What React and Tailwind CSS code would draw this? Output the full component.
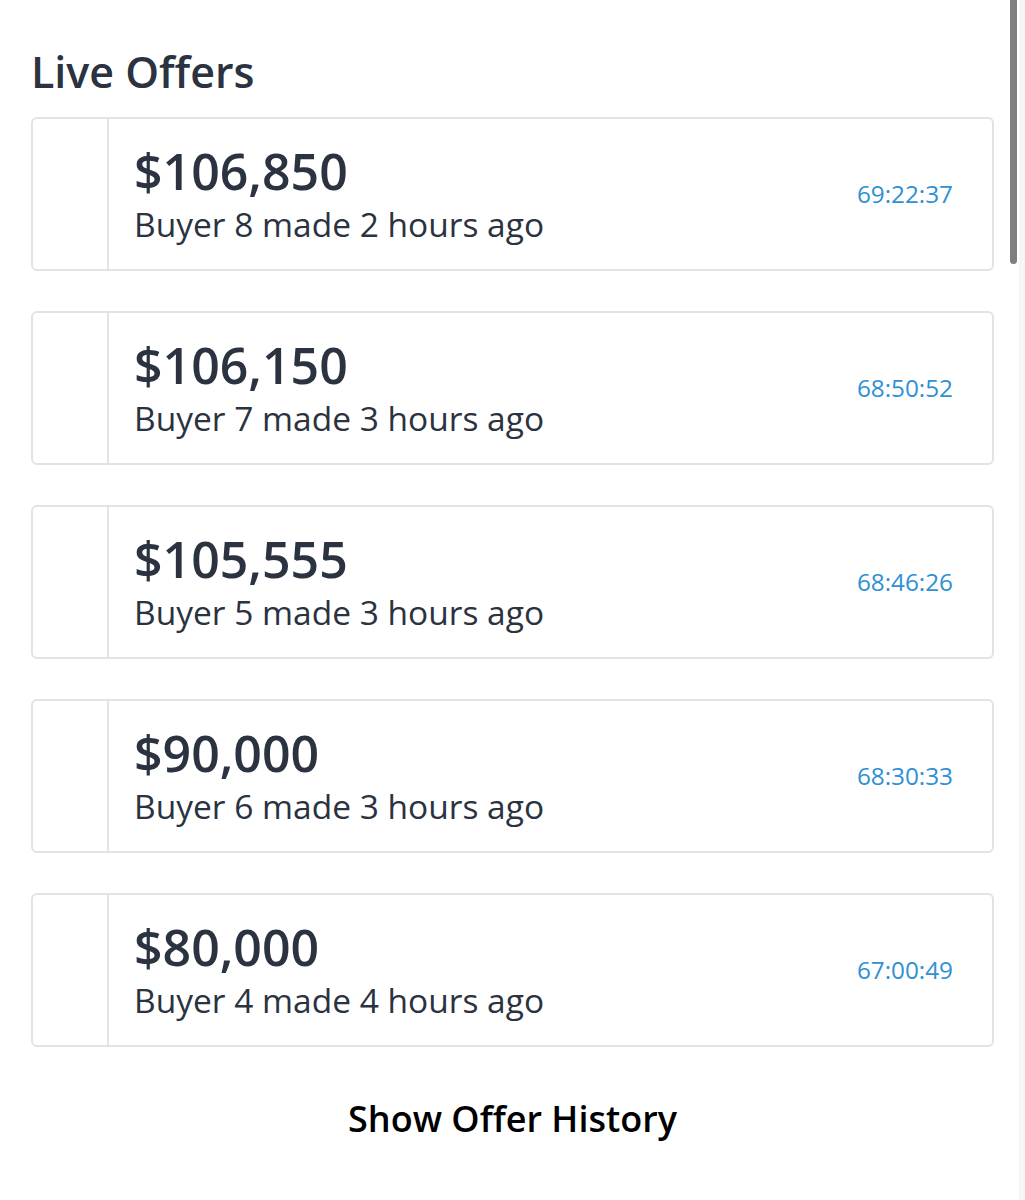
const offers = [
  { amount: "$106,850", buyer: "Buyer 8 made 2 hours ago", time: "69:22:37" },
  { amount: "$106,150", buyer: "Buyer 7 made 3 hours ago", time: "68:50:52" },
  { amount: "$105,555", buyer: "Buyer 5 made 3 hours ago", time: "68:46:26" },
  { amount: "$90,000", buyer: "Buyer 6 made 3 hours ago", time: "68:30:33" },
  { amount: "$80,000", buyer: "Buyer 4 made 4 hours ago", time: "67:00:49" },
];

export default function App() {
  return (
    <div className="relative min-h-[1200px] bg-white font-['Open_Sans',sans-serif] text-[#2b3240]">
      <div className="px-[31px] pt-[44px]">
        <h2 className="text-[43px] font-semibold leading-[56px]">Live Offers</h2>
        <div className="mt-[17px] flex flex-col gap-[40px]">
          {offers.map((o) => (
            <div
              key={o.time}
              className="flex h-[154px] rounded-[6px] border-2 border-[#e2e3e5]"
            >
              <div className="w-[76px] shrink-0 border-r-2 border-[#e2e3e5]" />
              <div className="flex flex-1 items-center justify-between pl-[25px] pr-[39px]">
                <div className="flex flex-col">
                  <div className="text-[50px] font-semibold leading-[60px]">{o.amount}</div>
                  <div className="text-[33.5px] leading-[46px]">{o.buyer}</div>
                </div>
                <div className="text-[24.3px] font-medium text-[#2f90d3]">{o.time}</div>
              </div>
            </div>
          ))}
        </div>
        <div className="mt-[48px] text-center text-[36px] font-semibold leading-[48px] text-black">
          Show Offer History
        </div>
      </div>
      <div className="absolute right-0 top-0 h-full w-[6px] bg-[#f6f6f6]" />
      <div className="absolute right-[8px] top-0 h-[264px] w-[7px] rounded-b-full bg-[#7f7f7f]" />
    </div>
  );
}
